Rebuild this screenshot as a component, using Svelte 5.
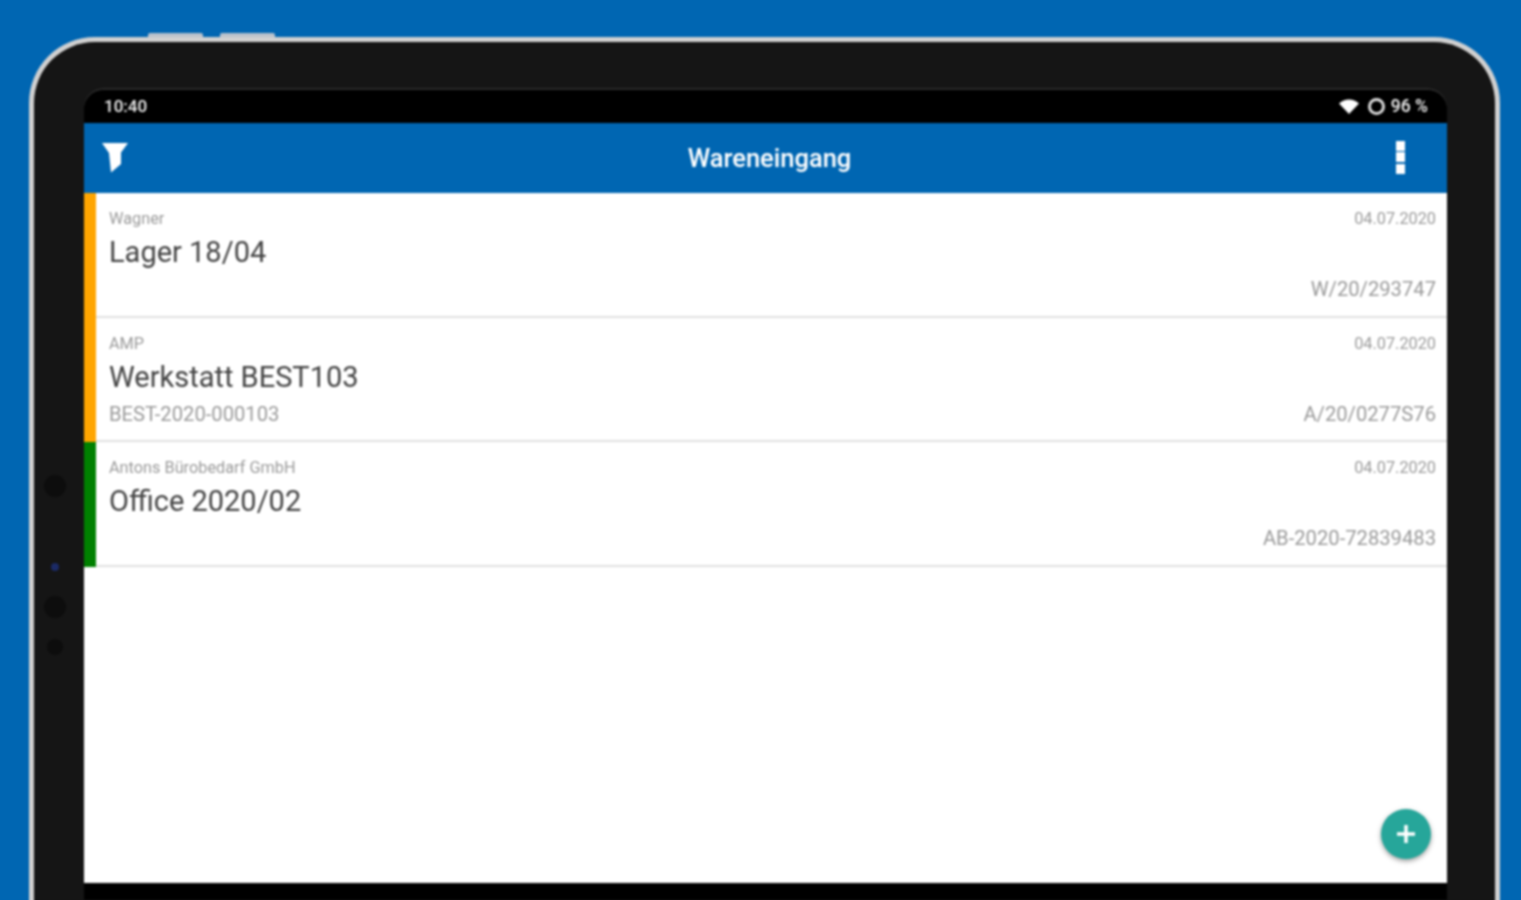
<script lang="ts">
	type Receipt = {
		supplier: string;
		title: string;
		reference?: string;
		date: string;
		number: string;
		status: 'open' | 'done';
	};

	const receipts: Receipt[] = [
		{ supplier: 'Wagner', title: 'Lager 18/04', date: '04.07.2020', number: 'W/20/293747', status: 'open' },
		{
			supplier: 'AMP',
			title: 'Werkstatt BEST103',
			reference: 'BEST-2020-000103',
			date: '04.07.2020',
			number: 'A/20/0277S76',
			status: 'open'
		},
		{
			supplier: 'Antons Bürobedarf GmbH',
			title: 'Office 2020/02',
			date: '04.07.2020',
			number: 'AB-2020-72839483',
			status: 'done'
		}
	];
</script>

<div class="page">
	<div class="tablet">
		<div class="buttons">
			<span></span>
			<span></span>
		</div>
		<div class="sensors">
			<span class="lens"></span>
			<span class="led"></span>
			<span class="lens"></span>
			<span class="lens small"></span>
		</div>
		<div class="screen">
			<header class="status">
				<span class="clock">10:40</span>
				<div class="status-right">
					<svg class="wifi" viewBox="0 0 20 15" aria-hidden="true">
						<path d="M0 4.500C3 1.600 6.300 0.500 10 0.500s7 1.100 10 4L10 15z" />
					</svg>
					<span class="ring"></span>
					<span class="battery">96 %</span>
				</div>
			</header>
			<div class="appbar">
				<svg class="filter" viewBox="0 0 26 30" aria-hidden="true">
					<path d="M0 0H26L19 9.500V21L9 29.500L7 10z" />
				</svg>
				<h1>Wareneingang</h1>
				<div class="more">
					<span></span>
					<span></span>
					<span></span>
				</div>
			</div>
			<main class="list">
				{#each receipts as receipt}
					<article class="row">
						<span class="bar {receipt.status}"></span>
						<div class="content">
							<div class="line small-line">
								<span>{receipt.supplier}</span>
								<span>{receipt.date}</span>
							</div>
							<h2>{receipt.title}</h2>
							<div class="line bottom-line">
								<span>{receipt.reference ?? ''}</span>
								<span>{receipt.number}</span>
							</div>
						</div>
					</article>
				{/each}
				<button class="fab" aria-label="Hinzufügen">
					<svg viewBox="0 0 20 20" aria-hidden="true">
						<path d="M10 1v18M1 10h18" />
					</svg>
				</button>
			</main>
			<div class="navbar"></div>
		</div>
	</div>
</div>

<style>
	:global(body) {
		background: #0066b2;
		overflow: hidden;
	}

	.page {
		height: 900px;
		padding: 37px 21px 0 29px;
		box-sizing: border-box;
		overflow: hidden;
		font-family: Roboto, 'Liberation Sans', sans-serif;
	}

	.tablet {
		position: relative;
		height: 900px;
		padding: 48px 48px 0 50px;
		box-sizing: border-box;
		border: solid #d0d0d0;
		border-width: 5px 5px 0 5px;
		border-radius: 66px 66px 0 0;
		background: #151515;
		filter: blur(0.9px);
	}

	.buttons {
		position: absolute;
		top: -9px;
		left: 114px;
		display: flex;
		gap: 17px;
	}

	.buttons span {
		width: 55px;
		height: 4px;
		border-radius: 2px 2px 0 0;
		background: #b9c2cc;
	}

	.sensors {
		position: absolute;
		top: 433px;
		left: 10px;
		display: flex;
		flex-direction: column;
		align-items: center;
		width: 22px;
	}

	.lens {
		width: 22px;
		height: 22px;
		border-radius: 50%;
		background: #0d0d0d;
	}

	.lens.small {
		width: 16px;
		height: 16px;
		margin-top: 21px;
	}

	.led {
		width: 8px;
		height: 8px;
		margin: 66px 0 25px;
		border-radius: 50%;
		background: #1b2a66;
	}

	.screen {
		display: flex;
		flex-direction: column;
		height: 810px;
		border-radius: 20px 20px 0 0;
		background: #000;
		box-shadow: 0 -2px 0 #2a2a2a;
		overflow: hidden;
	}

	.status {
		display: flex;
		flex: none;
		align-items: center;
		justify-content: space-between;
		height: 33px;
		padding: 0 19px 1px 20px;
		box-sizing: border-box;
		background: #000;
		color: #f2f2f2;
		font-weight: 500;
	}

	.clock {
		font-size: 17px;
	}

	.battery {
		font-size: 17.500px;
	}

	.status-right {
		display: flex;
		align-items: center;
		gap: 6px;
	}

	.wifi {
		width: 20px;
		height: 15px;
		margin-right: 3px;
		fill: #fff;
	}

	.ring {
		width: 11px;
		height: 11px;
		border: 3px solid #dcdcdc;
		border-radius: 50%;
	}

	.appbar {
		display: flex;
		flex: none;
		align-items: center;
		justify-content: space-between;
		height: 70px;
		padding: 0 42px 0 18px;
		box-sizing: border-box;
		background: #0066b2;
		color: #fff;
	}

	.filter {
		width: 26px;
		height: 30px;
		fill: #fff;
	}

	h1 {
		margin: 0 0 0 15px;
		font-size: 25.500px;
		font-weight: 500;
	}

	.more {
		display: flex;
		flex-direction: column;
		gap: 1.500px;
		margin-bottom: 2px;
	}

	.more span {
		width: 9px;
		height: 10px;
		background: #fff;
	}

	.list {
		position: relative;
		flex: 1;
		background: #fff;
	}

	.row {
		display: flex;
		height: 124.500px;
	}

	.bar {
		flex: none;
		width: 12px;
	}

	.bar.open {
		background: #ffa500;
	}

	.bar.done {
		background: #008000;
	}

	.content {
		display: flex;
		flex: 1;
		flex-direction: column;
		padding: 17px 11px 0 13px;
		box-sizing: border-box;
		border-bottom: 2px solid #e0e0e0;
	}

	.line {
		display: flex;
		justify-content: space-between;
		color: #9a9a9a;
	}

	.small-line {
		font-size: 16.300px;
		line-height: 18px;
	}

	h2 {
		margin: 7px 0 0;
		color: #444;
		font-size: 29px;
		font-weight: 400;
		line-height: 34px;
	}

	.bottom-line {
		margin-top: 8px;
		font-size: 20.200px;
		line-height: 24px;
	}

	.fab {
		position: absolute;
		right: 16px;
		bottom: 24px;
		display: flex;
		align-items: center;
		justify-content: center;
		width: 50px;
		height: 50px;
		padding: 0;
		border: 0;
		border-radius: 50%;
		background: #26a69a;
		box-shadow: 0 2px 5px rgba(0, 0, 0, 0.4);
	}

	.fab svg {
		width: 20px;
		height: 20px;
		fill: none;
		stroke: #fff;
		stroke-width: 3.500;
	}

	.navbar {
		flex: none;
		height: 17px;
		background: #000;
	}
</style>
